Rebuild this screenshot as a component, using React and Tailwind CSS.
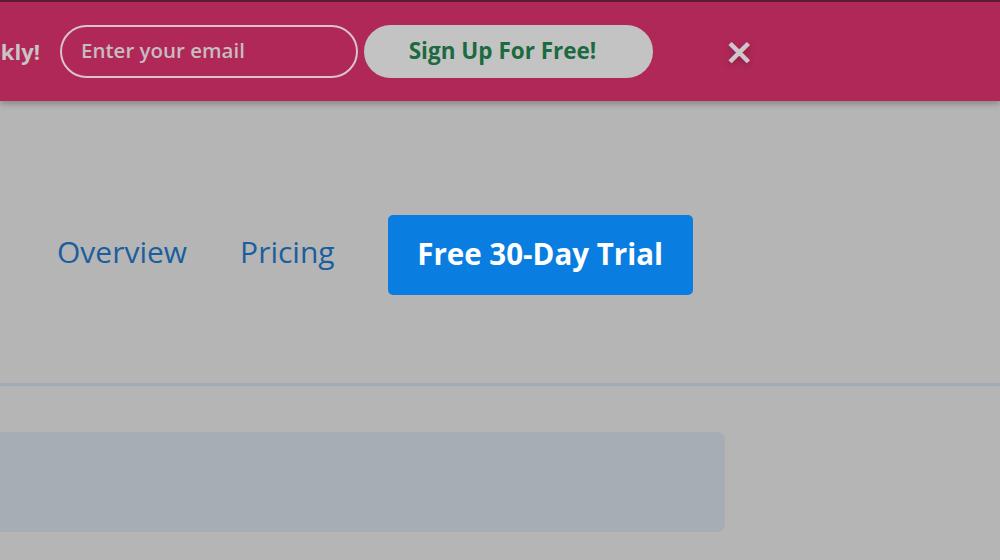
export default function App() {
  return (
    <div className="w-[1000px] h-[560px] bg-[#b5b5b5] overflow-hidden relative" style={{ fontFamily: '"Open Sans", Lato, sans-serif' }}>
      {/* Promo banner */}
      <div className="relative z-10 h-[101px] bg-[#b02857] border-t-2 border-[#5e1a33] shadow-[0_3px_6px_rgba(0,0,0,0.25)] flex items-center">
        <div className="w-[40px] overflow-hidden flex justify-end shrink-0">
          <span className="whitespace-nowrap text-[#c9c4c6] font-bold text-[22px]">Get Deals Weekly!</span>
        </div>
        <div className="ml-[20px] w-[298px] h-[53px] rounded-full border-2 border-[#d9c4cc] flex items-center pl-[19px] pb-[2px] text-[#c7bcc1] font-semibold text-[20.5px]">
          Enter your email
        </div>
        <button className="ml-[6px] w-[289px] h-[53px] rounded-full bg-[#c3c3c3] text-[#1b6a40] font-bold text-[22.5px] flex items-center justify-center pr-[12px] pb-[2px]">
          Sign Up For Free!
        </button>
        <span className="ml-[72px] text-[#cfc7ca] text-[34px] font-bold leading-none [text-shadow:0_2px_6px_rgba(0,0,0,0.25)]">✕</span>
      </div>

      {/* Nav */}
      <div className="h-[282px] flex items-center pl-[57px] pt-[26px]">
        <a className="text-[#1b5e9e] text-[30px] pb-[8px]">Overview</a>
        <a className="ml-[53px] text-[#1b5e9e] text-[30px] pb-[8px]">Pricing</a>
        <button className="ml-[53px] w-[305px] h-[80px] rounded-[5px] bg-[#0a7de1] text-white font-bold text-[29.5px] flex items-center justify-center pb-[2px]">
          Free 30-Day Trial
        </button>
      </div>

      <div className="h-[3px] bg-[#a3acb6]" />

      <div className="mt-[46px] w-[725px] h-[100px] bg-[#a6adb5] rounded-r-[8px]" />
    </div>
  )
}
